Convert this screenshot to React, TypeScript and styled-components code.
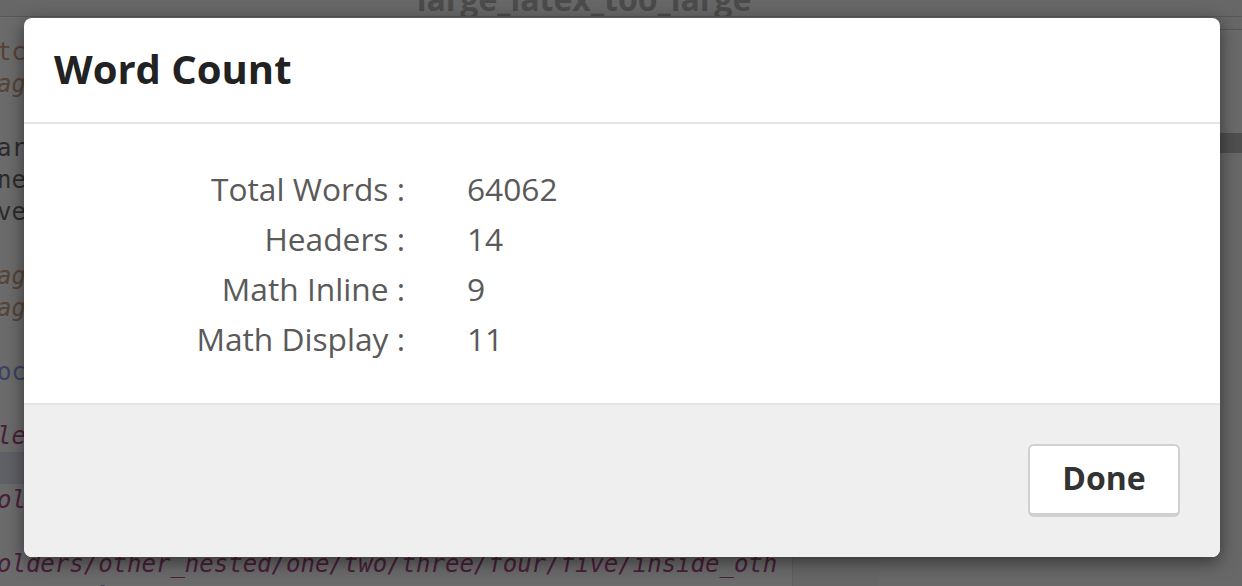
import styled, { createGlobalStyle } from "styled-components";

const GlobalStyle = createGlobalStyle`
  html, body {
    margin: 0;
    padding: 0;
    width: 1242px;
    height: 586px;
    overflow: hidden;
    background: #fff;
  }
  * {
    box-sizing: border-box;
  }
`;

type Tone = "plain" | "brown" | "blue" | "purple";

const codeLines: { text: string; tone: Tone; italic?: boolean; active?: boolean }[] = [
  { text: "tcolorbox}[title=Big document]", tone: "brown" },
  { text: "age{graphicx}", tone: "brown", italic: true },
  { text: "", tone: "plain" },
  { text: "ary content lives in nested folders so the", tone: "plain" },
  { text: "ne compile time can be measured with large", tone: "plain" },
  { text: "very long documents and many inputs.", tone: "plain" },
  { text: "", tone: "plain" },
  { text: "age{amsmath}", tone: "brown", italic: true },
  { text: "age{hyperref}", tone: "brown", italic: true },
  { text: "", tone: "plain" },
  { text: "ocument}", tone: "blue" },
  { text: "", tone: "plain" },
  { text: "les/first_chapter}", tone: "purple", italic: true },
  { text: "", tone: "plain", active: true },
  { text: "olders/other_nested/inside}", tone: "purple", italic: true },
  { text: "", tone: "plain" },
  { text: "olders/other_nested/one/two/three/four/five/inside_oth", tone: "purple", italic: true },
  { text: "ocument}", tone: "blue" },
];

const stats = [
  { label: "Total Words :", value: "64062" },
  { label: "Headers :", value: "14" },
  { label: "Math Inline :", value: "9" },
  { label: "Math Display :", value: "11" },
];

const App = () => {
  return (
    <Page>
      <GlobalStyle />
      <TopBar>
        <FileTitle>large_latex_too_large</FileTitle>
      </TopBar>
      <Workspace>
        <CodePane>
          {codeLines.map((line, i) => (
            <CodeLine key={i} $tone={line.tone} $italic={!!line.italic} $active={!!line.active}>
              {line.text}
            </CodeLine>
          ))}
        </CodePane>
        <ScrollGutter />
        <PreviewPane>
          <PreviewHeader />
          <PreviewToolbar />
          <PreviewStrip />
          <PreviewBody />
        </PreviewPane>
      </Workspace>

      <Backdrop>
        <Modal>
          <ModalHeader>
            <ModalTitle>Word Count</ModalTitle>
          </ModalHeader>
          <ModalBody>
            <StatsGrid>
              {stats.map((s) => (
                <StatRow key={s.label}>
                  <StatLabel>{s.label}</StatLabel>
                  <StatValue>{s.value}</StatValue>
                </StatRow>
              ))}
            </StatsGrid>
          </ModalBody>
          <ModalFooter>
            <DoneButton type="button">Done</DoneButton>
          </ModalFooter>
        </Modal>
      </Backdrop>
    </Page>
  );
};

const toneColor: Record<Tone, string> = {
  plain: "#6a6a6a",
  brown: "#cfa084",
  blue: "#8aa0e8",
  purple: "#b04a8a",
};

const Page = styled.div`
  position: relative;
  width: 1242px;
  height: 586px;
  overflow: hidden;
  display: flex;
  flex-direction: column;
  background: #fff;
`;

const TopBar = styled.div`
  height: 17px;
  flex-shrink: 0;
  display: flex;
  justify-content: center;
  align-items: flex-end;
  background: #f6f6f6;
  border-bottom: 1px solid #d0d0d0;
  overflow: hidden;
  padding-right: 74px;
`;

const FileTitle = styled.div`
  font-family: "Open Sans", sans-serif;
  font-weight: 700;
  font-size: 32px;
  line-height: 32px;
  margin-bottom: 1px;
  color: #b4b4b4;
  white-space: nowrap;
`;

const Workspace = styled.div`
  flex: 1;
  display: flex;
  min-height: 0;
`;

const CodePane = styled.div`
  width: 792px;
  flex-shrink: 0;
  padding-top: 19px;
  background: #fff;
  overflow: hidden;
`;

const CodeLine = styled.div<{ $tone: Tone; $italic: boolean; $active: boolean }>`
  height: 32px;
  line-height: 32px;
  font-family: "DejaVu Sans Mono", monospace;
  font-size: 24px;
  white-space: pre;
  margin-left: -3px;
  color: ${(p) => toneColor[p.$tone]};
  font-style: ${(p) => (p.$italic ? "italic" : "normal")};
  background: ${(p) => (p.$active ? "#e4e8f2" : "transparent")};
`;

const ScrollGutter = styled.div`
  width: 87px;
  flex-shrink: 0;
  background: #f4f4f4;
  border-left: 1px solid #e2e2e2;
`;

const PreviewPane = styled.div`
  flex: 1;
  display: flex;
  flex-direction: column;
  background: #fafafa;
`;

const PreviewHeader = styled.div`
  height: 13px;
  background: #f6f6f6;
  border-bottom: 1px solid #c8c8c8;
`;

const PreviewToolbar = styled.div`
  height: 103px;
  background: #fcfcfc;
`;

const PreviewStrip = styled.div`
  height: 20px;
  background: #bdbdbd;
`;

const PreviewBody = styled.div`
  flex: 1;
  background: #f8f8f8;
`;

const Backdrop = styled.div`
  position: absolute;
  inset: 0;
  background: rgba(0, 0, 0, 0.58);
  padding: 18px 0 0 24px;
`;

const Modal = styled.div`
  width: 1196px;
  background: #fff;
  border-radius: 8px;
  box-shadow: 0 5px 18px rgba(0, 0, 0, 0.5);
  overflow: hidden;
  font-family: "Open Sans", sans-serif;
`;

const ModalHeader = styled.div`
  height: 106px;
  display: flex;
  align-items: center;
  padding: 0 30px 2px;
  border-bottom: 2px solid #e5e5e5;
`;

const ModalTitle = styled.h3`
  margin: 0;
  font-size: 40px;
  font-weight: 700;
  color: #222;
  line-height: 1;
`;

const ModalBody = styled.div`
  height: 281px;
  padding: 40px 0 0;
  border-bottom: 2px solid #e5e5e5;
`;

const StatsGrid = styled.div`
  display: flex;
  flex-direction: column;
`;

const StatRow = styled.div`
  display: grid;
  grid-template-columns: 381px 1fr;
  column-gap: 62px;
  height: 50px;
  line-height: 50px;
  font-size: 31.7px;
  color: #5a5a5a;
`;

const StatLabel = styled.div`
  text-align: right;
  white-space: nowrap;
`;

const StatValue = styled.div`
  text-align: left;
`;

const ModalFooter = styled.div`
  height: 152px;
  background: #efefef;
  display: flex;
  justify-content: flex-end;
  align-items: flex-start;
  padding: 39px 40px 0 0;
`;

const DoneButton = styled.button`
  width: 152px;
  height: 73px;
  background: #fff;
  border: 2px solid #d0d0d0;
  border-bottom-width: 4px;
  border-radius: 6px;
  font-family: "Open Sans", sans-serif;
  font-weight: 700;
  font-size: 32px;
  color: #333;
  padding: 0 0 4px;
  cursor: pointer;
`;

export default App;
